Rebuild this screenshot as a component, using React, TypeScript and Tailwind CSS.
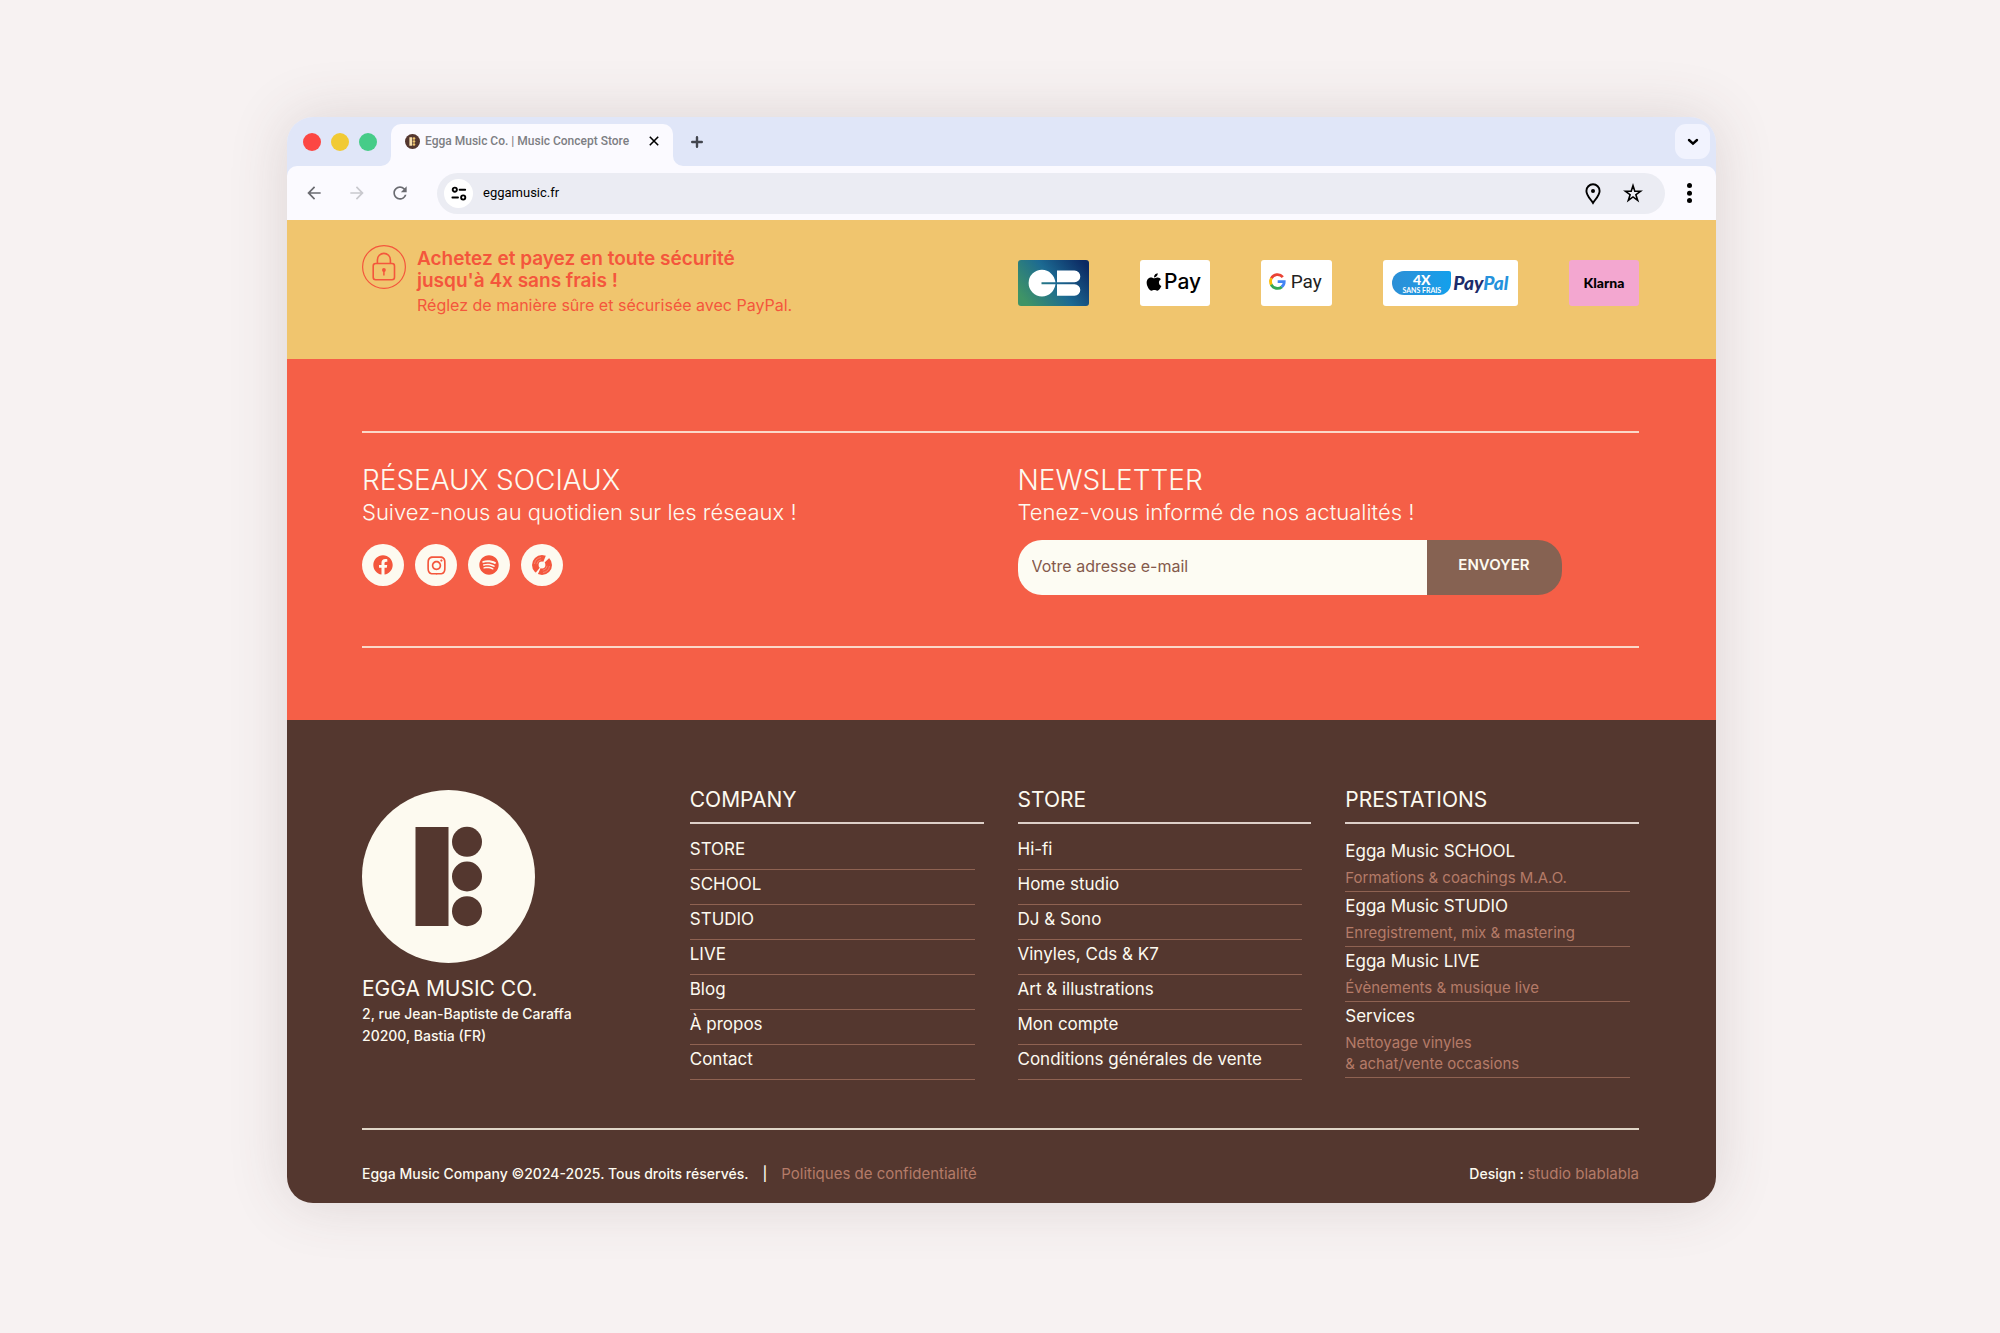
import React from "react";
import { FaApple, FaFacebook, FaInstagram, FaSpotify } from "react-icons/fa";
import { MdArrowBack, MdArrowForward, MdRefresh } from "react-icons/md";

const companyLinks = ["STORE", "SCHOOL", "STUDIO", "LIVE", "Blog", "À propos", "Contact"];
const storeLinks = [
  "Hi-fi",
  "Home studio",
  "DJ & Sono",
  "Vinyles, Cds & K7",
  "Art & illustrations",
  "Mon compte",
  "Conditions générales de vente",
];
const services = [
  { title: "Egga Music SCHOOL", lines: ["Formations & coachings M.A.O."] },
  { title: "Egga Music STUDIO", lines: ["Enregistrement, mix & mastering"] },
  { title: "Egga Music LIVE", lines: ["Évènements & musique live"] },
  { title: "Services", lines: ["Nettoyage vinyles", "& achat/vente occasions"] },
];

function TabFlare({ className }: { className: string }) {
  return (
    <svg viewBox="0 0 10 10" className={className} aria-hidden="true">
      <path d="M10 0v10H0A10 10 0 0 0 10 0Z" fill="#fbfaff" />
    </svg>
  );
}

function BrowserBar() {
  return (
    <header className="bg-[#e0e6f8] font-[Roboto,sans-serif]">
      <div className="flex h-[49px] items-end pr-[6px] pl-4">
        <div className="flex h-[49px] items-center gap-[10px]">
          <span className="size-[18px] rounded-full bg-[#fc4743]" />
          <span className="size-[18px] rounded-full bg-[#f1ca34]" />
          <span className="size-[18px] rounded-full bg-[#46cc88]" />
        </div>
        <div className="relative ml-[14px] flex h-[42px] w-[282px] items-center rounded-t-[10px] bg-[#fbfaff] pr-[14px] pb-2 pl-[14px]">
          <TabFlare className="absolute bottom-0 -left-[10px] size-[10px]" />
          <TabFlare className="absolute -right-[10px] bottom-0 size-[10px] -scale-x-100" />
          <svg viewBox="0 0 15 15" className="size-[15px]" aria-hidden="true">
            <circle cx="7.5" cy="7.5" r="7.5" fill="#54372f" />
            <path d="M4.4 3.2h2.800v8.600H4.400z" fill="#f6dfae" />
            <circle cx="9" cy="4.500" r="1.300" fill="#f0c66e" />
            <circle cx="9" cy="7.500" r="1.300" fill="#f0c66e" />
            <circle cx="9" cy="10.500" r="1.300" fill="#f0c66e" />
          </svg>
          <span className="ml-[5px] text-xs leading-4 font-medium whitespace-nowrap text-[#7d7e83]">
            Egga Music Co. | Music Concept Store
          </span>
          <button type="button" aria-label="Fermer l’onglet" className="ml-auto">
            <svg viewBox="0 0 10 10" className="size-[10px]" fill="none" stroke="#000" strokeWidth="1.600">
              <path d="m.8.8 8.400 8.400M9.200.8.8 9.200" />
            </svg>
          </button>
        </div>
        <button type="button" aria-label="Nouvel onglet" className="ml-[18px] flex h-[49px] items-center">
          <svg viewBox="0 0 12 12" className="size-3" stroke="#43464f" strokeWidth="2.400" strokeLinecap="round">
            <path d="M6 1.200v9.600M1.200 6h9.600" />
          </svg>
        </button>
        <button
          type="button"
          aria-label="Rechercher dans les onglets"
          className="mb-[7px] ml-auto flex size-[35px] items-center justify-center rounded-[11px] bg-[#f1f3fe]"
        >
          <svg viewBox="0 0 12 8" className="h-2 w-3" fill="none" stroke="#000" strokeWidth="2.400" strokeLinecap="round">
            <path d="m2 2 4 3.600L10 2" />
          </svg>
        </button>
      </div>

      <div className="flex h-[54px] items-center rounded-t-[10px] bg-[#fbfaff] pr-[24px] pl-[17px]">
        <div className="flex items-center gap-[23px] text-[#6a6b71]">
          <button type="button" aria-label="Précédent">
            <MdArrowBack className="size-5" />
          </button>
          <button type="button" aria-label="Suivant" className="text-[#c9c9ce]">
            <MdArrowForward className="size-5" />
          </button>
          <button type="button" aria-label="Actualiser" className="text-[#6a6b71]">
            <MdRefresh className="size-5" />
          </button>
        </div>
        <div className="ml-[27px] flex h-[41px] flex-1 items-center rounded-full bg-[#ebecf3] pr-[22px] pl-[7px]">
          <button
            type="button"
            aria-label="Informations du site"
            className="flex size-[29px] items-center justify-center rounded-full bg-white"
          >
            <svg viewBox="0 0 16 16" className="size-4" fill="none" stroke="#000" strokeWidth="1.900">
              <circle cx="3.800" cy="4.700" r="2.100" />
              <circle cx="12.200" cy="12.500" r="2.100" />
              <path d="M8.600 4.700h5.600M1.400 12.500h5.600" strokeLinecap="round" />
            </svg>
          </button>
          <input
            aria-label="Adresse du site"
            defaultValue="eggamusic.fr"
            className="ml-[10px] min-w-0 flex-1 bg-transparent text-[13px] leading-4 text-black outline-none"
          />
          <button type="button" aria-label="Position" className="pt-[2px]">
            <svg viewBox="0 0 16 22" className="h-[22px] w-4" fill="none" stroke="#000" strokeWidth="1.900">
              <path d="M8 20C5 15.500 1.400 12 1.400 7.900a6.600 6.600 0 0 1 13.200 0C14.600 12 11 15.500 8 20Z" />
              <circle cx="8" cy="8" r="2" fill="#000" stroke="none" />
            </svg>
          </button>
          <button type="button" aria-label="Ajouter aux favoris" className="ml-[22px]">
            <svg viewBox="0 0 20 20" className="size-5" fill="none" stroke="#000" strokeWidth="1.600">
              <path d="m10 2.600 1.800 5.600h5.900l-4.800 3.500 1.800 5.700L10 13.900l-4.700 3.500 1.800-5.700L2.300 8.200h5.900Z" />
            </svg>
          </button>
        </div>
        <button type="button" aria-label="Menu" className="ml-[22px]">
          <svg viewBox="0 0 5 20" className="h-5 w-[5px]">
            <circle cx="2.500" cy="2.500" r="2.500" />
            <circle cx="2.500" cy="10.200" r="2.500" />
            <circle cx="2.500" cy="17.500" r="2.500" />
          </svg>
        </button>
      </div>
    </header>
  );
}

function LockIcon() {
  return (
    <svg viewBox="0 0 44 44" className="size-11 shrink-0" fill="none" stroke="#f4563c" aria-hidden="true">
      <circle cx="22" cy="22" r="21.400" strokeWidth="1.200" />
      <rect x="11.200" y="18.500" width="21.300" height="16.300" rx="2.500" strokeWidth="1.600" />
      <path d="M15.400 18.500v-3.600a6.500 6.500 0 0 1 13 0v3.600" strokeWidth="1.600" />
      <circle cx="21.900" cy="25" r="1.900" fill="#f4563c" stroke="none" />
      <path d="M21.900 25.500v5" strokeWidth="1.500" />
    </svg>
  );
}

function CarteBancaire() {
  return (
    <svg viewBox="0 0 71 46" className="h-[46px] w-[71px] rounded-[3px]" role="img" aria-label="CB">
      <defs>
        <linearGradient id="cb-fill" x1="0" y1=".7" x2="1" y2=".2">
          <stop offset="0" stopColor="#3f9466" />
          <stop offset=".5" stopColor="#1c6a92" />
          <stop offset="1" stopColor="#0c2a63" />
        </linearGradient>
      </defs>
      <rect width="71" height="46" fill="url(#cb-fill)" />
      <path
        d="M37.500 22.200H23.500v2H37.500C36.500 31 31 36.500 24 36.500A13.400 13.400 0 0 1 24 9.700C31 9.700 36.500 15.200 37.500 22.200Z"
        fill="#fff"
      />
      <path d="M39 10.600h17.500a5.800 5.800 0 0 1 0 11.600H39zM39 24.200h17.500a5.800 5.800 0 0 1 0 11.600H39z" fill="#fff" />
    </svg>
  );
}

function GoogleMark() {
  return (
    <svg viewBox="0 0 18 18" className="size-[17px]" fill="none" strokeWidth="3" aria-hidden="true">
      <path d="M14.600 4.300A7.400 7.400 0 0 0 2.400 5.800" stroke="#ea4335" />
      <path d="M2.600 5.400a7.400 7.400 0 0 0 0 7.200" stroke="#fbbc05" />
      <path d="M2.400 12.300a7.400 7.400 0 0 0 11.300 2.300" stroke="#34a853" />
      <path d="M13.400 14.800c1.800-1.400 2.700-3.300 2.700-5.600H9.200" stroke="#4285f4" />
    </svg>
  );
}

function PaymentBand() {
  return (
    <section className="grid h-[139px] grid-cols-2 gap-x-[34px] bg-[#f0c56e] pr-[77px] pl-[75px]">
      <div className="flex gap-[11px] pt-[25px] text-[#f4563c]">
        <LockIcon />
        <div className="pt-[3px]">
          <h2 className="text-[19px] leading-[22px] font-semibold">
            Achetez et payez en toute sécurité
            <br />
            jusqu'à 4x sans frais !
          </h2>
          <p className="mt-[2px] text-base leading-[22px]">Réglez de manière sûre et sécurisée avec PayPal.</p>
        </div>
      </div>
      <div className="flex items-start justify-between pt-10">
        <CarteBancaire />
        <div className="flex h-[46px] w-[70px] items-center justify-center rounded-[3px] bg-white pr-1 pb-[3px] text-black">
          <FaApple className="size-5" />
          <span className="text-[21px] leading-6 font-medium">Pay</span>
        </div>
        <div className="flex h-[46px] w-[71px] items-center justify-center gap-[5px] rounded-[3px] bg-white pr-[2px] pb-[3px] text-[#222]">
          <GoogleMark />
          <span className="font-[Roboto,sans-serif] text-[19px] leading-6">Pay</span>
        </div>
        <div className="flex h-[46px] w-[135px] items-center justify-center gap-[2px] rounded-[3px] bg-white">
          <div className="flex h-6 w-[59px] flex-col items-center justify-center rounded-tl-[12px] rounded-tr-[2px] rounded-br-[12px] rounded-bl-[12px] bg-linear-to-r from-[#2b8fd6] to-[#12a0ec] text-white">
            <span className="font-[Lato,sans-serif] text-sm leading-[13px] font-black">4X</span>
            <span className="font-[Lato,sans-serif] text-[7px] leading-[8px] font-bold">SANS FRAIS</span>
          </div>
          <span className="font-[Lato,sans-serif] text-[19px] leading-6 font-black text-[#1d2c6b] italic">
            Pay<span className="text-[#2592dc]">Pal</span>
          </span>
        </div>
        <div className="flex h-[46px] w-[70px] items-center justify-center rounded-[3px] bg-[#f3a7d0] font-[Lato,sans-serif] text-sm font-black text-black">
          Klarna
        </div>
      </div>
    </section>
  );
}

function VinylIcon() {
  return (
    <svg viewBox="0 0 20 20" className="size-5" aria-hidden="true">
      <circle cx="10" cy="10" r="10" fill="currentColor" />
      <path
        d="M2.500 9a7.600 7.600 0 0 1 6.500-6.500M4.800 9.200a5.300 5.300 0 0 1 4.400-4.400M17.500 11a7.600 7.600 0 0 1-6.500 6.500M15.200 10.800a5.300 5.300 0 0 1-4.400 4.400"
        fill="none"
        stroke="#fdfaf0"
        strokeWidth=".3"
      />
      <path d="m10 10 4.300-10.500L18 2.200ZM10 10 3.500 18l2 2Z" fill="#fdfaf0" />
      <circle cx="10" cy="10" r="3.400" fill="#fdfaf0" />
    </svg>
  );
}

const socials = [
  { name: "Facebook", icon: <FaFacebook className="size-5" /> },
  { name: "Instagram", icon: <FaInstagram className="size-[21px]" /> },
  { name: "Spotify", icon: <FaSpotify className="size-5" /> },
  { name: "Vinyles", icon: <VinylIcon /> },
];

function ContactBand() {
  return (
    <section className="bg-[#f55f47] py-[72px] pr-[77px] pl-[75px] text-[#fdfaf0]">
      <div className="grid h-[217px] grid-cols-2 gap-x-[34px] border-y-2 border-[#fbd8c9] pt-[31px]">
        <div>
          <h2 className="text-[28px] leading-8 font-light">RÉSEAUX SOCIAUX</h2>
          <p className="text-[22px] leading-8 font-light">Suivez-nous au quotidien sur les réseaux !</p>
          <ul className="mt-4 flex gap-[11px]">
            {socials.map((s) => (
              <li key={s.name}>
                <a
                  href="#"
                  aria-label={s.name}
                  className="flex size-[42px] items-center justify-center rounded-full bg-[#fdfaf0] text-[#f4563c]"
                >
                  {s.icon}
                </a>
              </li>
            ))}
          </ul>
        </div>
        <div>
          <h2 className="text-[28px] leading-8 font-light">NEWSLETTER</h2>
          <p className="text-[22px] leading-8 font-light">Tenez-vous informé de nos actualités !</p>
          <form className="mt-3 flex h-[55px] w-[544px] max-w-full" onSubmit={(e) => e.preventDefault()}>
            <input
              type="email"
              aria-label="Votre adresse e-mail"
              placeholder="Votre adresse e-mail"
              className="min-w-0 flex-1 rounded-l-[24px] bg-[#fdfcf3] pr-4 pb-1 pl-[14px] text-base text-[#54372f] outline-none placeholder:text-[#84594b] placeholder:opacity-100"
            />
            <button type="submit" className="w-[135px] rounded-r-[24px] bg-[#866252] pb-1 text-[15px] font-semibold">
              ENVOYER
            </button>
          </form>
        </div>
      </div>
    </section>
  );
}

function ColumnTitle({ children }: { children: React.ReactNode }) {
  return <h3 className="h-[35px] border-b-2 border-[#ddcfc8] text-[21px] leading-[21px]">{children}</h3>;
}

function LinkColumn({ title, links }: { title: string; links: string[] }) {
  return (
    <nav aria-label={title}>
      <ColumnTitle>{title}</ColumnTitle>
      <ul className="mr-[9px] pt-[11px]">
        {links.map((l) => (
          <li key={l} className="h-[35px] border-b border-[#8f6252]">
            <a href="#" className="block pt-[3px] text-[17px] leading-[22px]">
              {l}
            </a>
          </li>
        ))}
      </ul>
    </nav>
  );
}

function Footer() {
  return (
    <footer className="bg-[#54372f] pt-[69px] pr-[77px] pb-[17px] pl-[75px] text-[#fdfaf0]">
      <div className="grid h-[339px] grid-cols-4 gap-x-[34px]">
        <div>
          <svg viewBox="0 0 173 173" className="mt-px size-[173px]" role="img" aria-label="Egga Music Co.">
            <circle cx="86.500" cy="86.500" r="86.500" fill="#fdfaf0" />
            <g fill="#54372f">
              <rect x="53.500" y="37" width="33" height="99" />
              <circle cx="105" cy="51.800" r="15" />
              <circle cx="105" cy="86.500" r="15" />
              <circle cx="105" cy="121.200" r="15" />
            </g>
          </svg>
          <address className="mt-3 not-italic">
            <strong className="block text-[21px] leading-7 font-normal">EGGA MUSIC CO.</strong>
            <span className="block text-sm leading-[22px] font-medium">
              2, rue Jean-Baptiste de Caraffa
              <br />
              20200, Bastia (FR)
            </span>
          </address>
        </div>
        <LinkColumn title="COMPANY" links={companyLinks} />
        <LinkColumn title="STORE" links={storeLinks} />
        <nav aria-label="PRESTATIONS">
          <ColumnTitle>PRESTATIONS</ColumnTitle>
          <ul className="mr-[9px] pt-[13px]">
            {services.map((s) => (
              <li key={s.title} className="border-b border-[#8f6252] pt-[2px] pb-[3px]">
                <a href="#" className="mb-1 block text-[17px] leading-6">
                  {s.title}
                </a>
                {s.lines.map((line) => (
                  <p key={line} className="text-[15px] leading-[21px] text-[#b57b68]">
                    {line}
                  </p>
                ))}
              </li>
            ))}
          </ul>
        </nav>
      </div>
      <div className="flex items-center border-t-2 border-[#e0d6c8] pt-8 text-sm leading-6 font-medium">
        <p>Egga Music Company ©2024-2025. Tous droits réservés.</p>
        <span className="mx-[14px]">|</span>
        <a href="#" className="text-[15px] font-normal text-[#b57b68]">
          Politiques de confidentialité
        </a>
        <p className="ml-auto">
          Design :{" "}
          <a href="#" className="text-[15px] font-normal text-[#b57b68]">
            studio blablabla
          </a>
        </p>
      </div>
    </footer>
  );
}

export default function App() {
  return (
    <div className="min-h-screen bg-[#f7f2f2] pt-[117px] pr-[284px] pb-[130px] pl-[287px] font-[Inter,sans-serif]">
      <main className="overflow-hidden rounded-[26px] shadow-[0_0_60px_rgba(90,60,60,0.16)]">
        <BrowserBar />
        <PaymentBand />
        <ContactBand />
        <Footer />
      </main>
    </div>
  );
}
